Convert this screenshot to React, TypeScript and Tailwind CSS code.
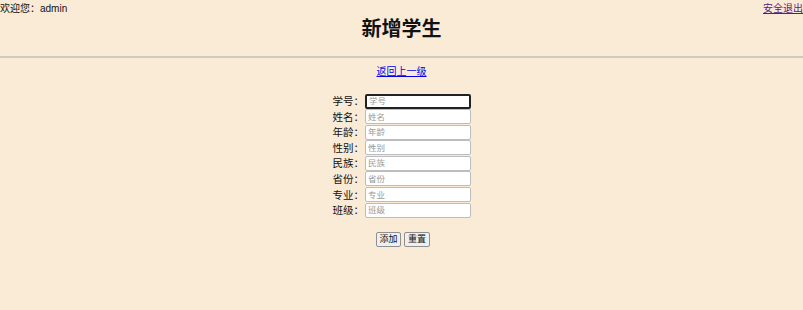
import React from 'react';

const fields = [
  { label: '学号', name: 'sno' },
  { label: '姓名', name: 'name' },
  { label: '年龄', name: 'age' },
  { label: '性别', name: 'sex' },
  { label: '民族', name: 'nation' },
  { label: '省份', name: 'province' },
  { label: '专业', name: 'major' },
  { label: '班级', name: 'clazz' },
];

const App = () => {
  return (
    <div
      className="min-h-[310px] w-full bg-[#faebd7] text-[#111]"
      style={{ fontFamily: '"Liberation Sans", "Noto Sans CJK SC", sans-serif' }}
    >
      <div className="h-[56px]">
        <div className="flex justify-between text-[10px] leading-[17px]">
          <span>欢迎您：admin</span>
          <a href="#" className="text-[#551a8b] underline">安全退出</a>
        </div>
        <h1 className="text-center text-[20px] font-bold leading-[26px] mt-[-1px]">新增学生</h1>
      </div>
      <div className="h-[2px] bg-[#cfc9c0]" />
      <div className="text-center mt-[7px] text-[10px] leading-[14px]">
        <a href="#" className="text-[#0000ee] underline">返回上一级</a>
      </div>
      <form className="flex flex-col items-center mt-[15px]">
        <div className="flex flex-col gap-[1.6px] ml-[-2px]">
          {fields.map((f, i) => (
            <div key={f.name} className="flex items-center h-[14px]">
              <label className="w-[34px] text-right text-[10.5px] leading-[14px] mr-[1px]" style={{ fontFamily: '"Noto Sans CJK SC", sans-serif' }}>{f.label}：</label>
              <input
                name={f.name}
                placeholder={f.label}
                autoFocus={i === 0}
                className={
                  'w-[106px] h-[15px] bg-white px-[2px] text-[8.5px] rounded-[2px] outline-none placeholder:text-[#9a9a9a] ' +
                  (i === 0 ? 'border-2 border-[#222]' : 'border border-[#bdbdbd]')
                }
              />
            </div>
          ))}
        </div>
        <div className="flex gap-[3px] mt-[15px] ml-[3px]">
          <button type="button" className="w-[25px] h-[15px] text-[9px] leading-[13px] bg-[#efefef] border border-[#8f8f8f] rounded-[2px]">添加</button>
          <button type="reset" className="w-[26px] h-[15px] text-[9px] leading-[13px] bg-[#efefef] border border-[#8f8f8f] rounded-[2px]">重置</button>
        </div>
      </form>
    </div>
  );
};

export default App;
